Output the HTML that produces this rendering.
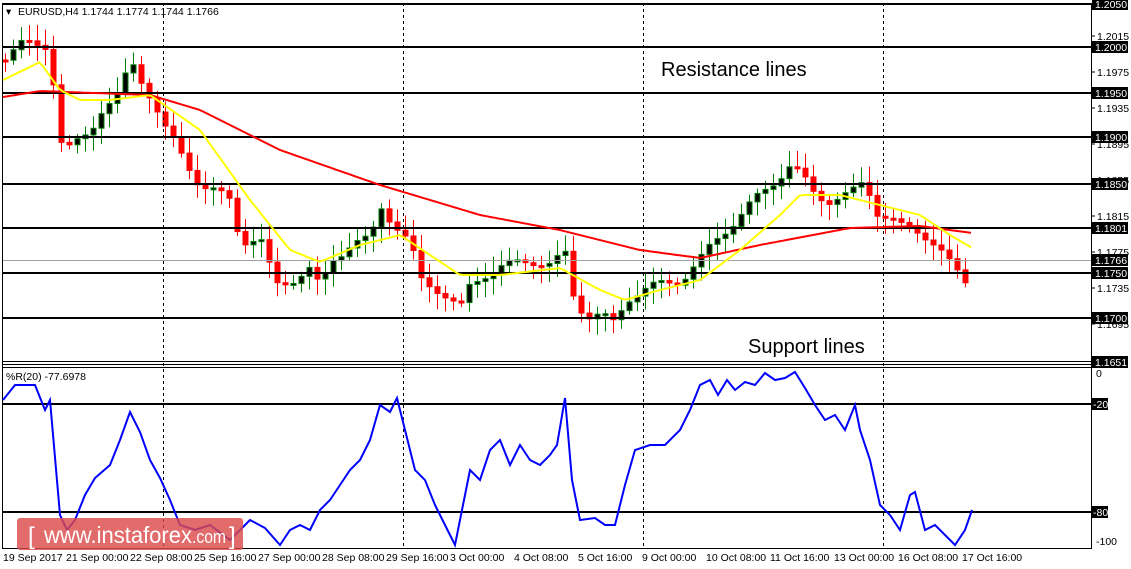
<!DOCTYPE html>
<html><head><meta charset="utf-8">
<style>
html,body{margin:0;padding:0;background:#fff;}
body{width:1131px;height:569px;overflow:hidden;position:relative;font-family:"Liberation Sans",sans-serif;}
svg{position:absolute;left:0;top:0;}
.ax{font-size:10.5px;fill:#000;font-family:"Liberation Sans",sans-serif;}
.lab{font-size:10.5px;fill:#fff;font-family:"Liberation Sans",sans-serif;}
.dt{font-size:10.5px;fill:#000;font-family:"Liberation Sans",sans-serif;}
.big{font-size:20px;font-family:"Liberation Sans",sans-serif;fill:#000;}
</style></head><body>
<svg id="s" width="1131" height="569" xmlns="http://www.w3.org/2000/svg">
<rect x="0" y="0" width="1131" height="569" fill="#fff"/>
<g id="cand"></g>
<g stroke="#000" stroke-width="1" stroke-dasharray="3,3">
<line x1="163.5" y1="3" x2="163.5" y2="548"/><line x1="403.5" y1="3" x2="403.5" y2="548"/>
<line x1="643.5" y1="3" x2="643.5" y2="548"/><line x1="883.5" y1="3" x2="883.5" y2="548"/>
</g>
<line x1="2" y1="260.5" x2="1091" y2="260.5" stroke="#a0a0a0"/>
<g stroke="#000" stroke-width="2">
<line x1="2" y1="4" x2="1091" y2="4"/><line x1="2" y1="47" x2="1091" y2="47"/>
<line x1="2" y1="93" x2="1091" y2="93"/><line x1="2" y1="137" x2="1091" y2="137"/>
<line x1="2" y1="184" x2="1091" y2="184"/><line x1="2" y1="228" x2="1091" y2="228"/>
<line x1="2" y1="273" x2="1091" y2="273"/><line x1="2" y1="318" x2="1091" y2="318"/>
<line x1="2" y1="404" x2="1091" y2="404"/><line x1="2" y1="512" x2="1091" y2="512"/>
</g>
<line x1="2" y1="361.5" x2="1091" y2="361.5" stroke="#000"/>
<line x1="2" y1="364.5" x2="1091" y2="364.5" stroke="#000"/>
<line x1="2" y1="367.5" x2="1091" y2="367.5" stroke="#000"/>
<line x1="2.5" y1="3" x2="2.5" y2="548" stroke="#000"/>
<line x1="1091.5" y1="3" x2="1091.5" y2="548" stroke="#000"/>
<line x1="2" y1="548.5" x2="1092" y2="548.5" stroke="#000"/>
<polyline id="red" fill="none" stroke="#ff0000" stroke-width="2"/>
<polyline id="yel" fill="none" stroke="#ffff00" stroke-width="2"/>
<polyline id="blue" fill="none" stroke="#0000ff" stroke-width="2"/>
<text x="6" y="15" class="ax">▾</text>
<text x="18" y="15" class="ax" font-size="11">EURUSD,H4  1.1744 1.1774 1.1744 1.1766</text>
<text x="6" y="380" class="ax" font-size="9.5">%R(20) -77.6978</text>
<text x="661" y="76" class="big">Resistance lines</text>
<text x="748" y="353" class="big">Support lines</text>
<g id="rax"></g>
<g class="dt">
<text x="3" y="561">19 Sep 2017</text><text x="66" y="561">21 Sep 00:00</text><text x="130" y="561">22 Sep 08:00</text><text x="194" y="561">25 Sep 16:00</text><text x="258" y="561">27 Sep 00:00</text><text x="322" y="561">28 Sep 08:00</text><text x="386" y="561">29 Sep 16:00</text><text x="450" y="561">3 Oct 00:00</text><text x="514" y="561">4 Oct 08:00</text><text x="578" y="561">5 Oct 16:00</text><text x="642" y="561">9 Oct 00:00</text><text x="706" y="561">10 Oct 08:00</text><text x="770" y="561">11 Oct 16:00</text><text x="834" y="561">13 Oct 00:00</text><text x="898" y="561">16 Oct 08:00</text><text x="962" y="561">17 Oct 16:00</text>
</g>
<rect x="17" y="518" width="226" height="32" rx="3" fill="#dc4b4b" fill-opacity="0.82"/>
<text x="28" y="544" font-family="'Liberation Sans',sans-serif" font-size="24" fill="#fff">[</text>
<text x="44" y="543" font-family="'Liberation Sans',sans-serif" font-size="23" fill="#fff" textLength="148" lengthAdjust="spacingAndGlyphs">www.instaforex</text>
<text x="192" y="543" font-family="'Liberation Sans',sans-serif" font-size="18" fill="#fff" textLength="34" lengthAdjust="spacingAndGlyphs">.com</text>
<text x="229" y="544" font-family="'Liberation Sans',sans-serif" font-size="24" fill="#fff">]</text>
</svg>
<script>
(function(){
function interp(pts,x){for(var i=0;i<pts.length-1;i++){if(x<=pts[i+1][0]){var a=pts[i],b=pts[i+1];return a[1]+(b[1]-a[1])*(x-a[0])/(b[0]-a[0]);}}return pts[pts.length-1][1];}
var cl=[[0,60],[20,45],[50,45],[58,140],[70,150],[90,130],[100,110],[120,95],[130,60],[150,95],[165,130],[185,160],[200,185],[230,200],[240,240],[260,240],[275,285],[290,280],[310,270],[320,290],[330,260],[350,245],[370,240],[380,205],[395,225],[410,245],[420,280],[440,290],[460,310],[470,285],[490,270],[510,265],[530,260],[550,265],[565,255],[570,290],[585,315],[600,315],[615,325],[625,300],[640,290],[660,285],[680,280],[700,260],[720,235],[740,215],[760,195],[775,180],[790,165],[800,175],[815,195],[830,200],[850,195],[865,180],[875,210],[890,220],[905,230],[920,230],[935,245],[950,265],[965,280],[972,262]];
var NS='http://www.w3.org/2000/svg';
var g=document.getElementById('cand');var prev=interp(cl,0);
function el(n,at){var e=document.createElementNS(NS,n);for(var k in at)e.setAttribute(k,at[k]);g.appendChild(e);}
for(var x=5;x<=972;x+=8){var c=interp(cl,x)+Math.sin(x*1.7)*5;var o=prev;var tp=Math.min(o,c),bt=Math.max(o,c);if(bt-tp<2)bt=tp+2;var hi=tp-4-Math.abs(Math.sin(x*3.1))*12,lo=bt+4+Math.abs(Math.cos(x*2.3))*12;
var bull=c<o;var col=bull?'#008000':'#ff0000';
el('line',{x1:x+0.5,y1:hi,x2:x+0.5,y2:lo,stroke:col});
el('rect',{x:x-2,y:tp,width:5,height:bt-tp,fill:bull?'#000':'#ff0000',stroke:col});prev=c;}
function pl(id,pts,step){var s='';for(var x=pts[0][0];x<=pts[pts.length-1][0];x+=step)s+=x+','+interp(pts,x).toFixed(1)+' ';document.getElementById(id).setAttribute('points',s);}
pl('red',[[3,97],[40,91],[150,95],[200,110],[280,150],[380,185],[480,215],[560,230],[640,250],[700,258],[760,245],[850,228],[920,226],[972,233]],4);
pl('yel',[[3,80],[40,62],[60,90],[80,100],[110,100],[150,95],[200,130],[250,200],[290,250],[320,262],[360,245],[400,235],[430,255],[460,275],[500,275],[560,268],[600,290],[625,300],[660,290],[700,280],[740,250],[780,215],[800,195],[840,195],[880,205],[920,215],[950,235],[972,248]],4);
var b=[[3,400],[15,385],[35,385],[45,410],[50,400],[60,515],[67,530],[75,520],[85,495],[95,478],[110,465],[120,440],[130,412],[140,432],[150,460],[160,478],[170,500],[180,525],[195,530],[210,525],[230,540],[250,520],[265,528],[280,545],[290,530],[300,525],[310,530],[320,510],[330,500],[340,485],[350,470],[360,460],[370,440],[380,405],[390,412],[397,398],[405,430],[415,470],[425,480],[435,505],[445,525],[455,545],[465,495],[470,470],[480,480],[490,450],[500,440],[510,465],[520,445],[530,460],[540,465],[550,455],[557,445],[565,398],[572,480],[580,520],[595,518],[605,525],[615,525],[625,485],[635,450],[650,445],[665,445],[680,430],[690,410],[700,385],[710,380],[718,395],[727,380],[735,390],[745,382],[755,385],[765,373],[775,380],[785,378],[795,372],[805,388],[815,405],[825,420],[835,415],[845,430],[855,405],[860,430],[870,460],[880,505],[890,515],[900,530],[910,495],[915,492],[925,530],[935,525],[945,535],[955,545],[965,530],[972,510]];
document.getElementById('blue').setAttribute('points',b.map(function(p){return p.join(',')}).join(' '));
var r='';
[[1.2015,36],[1.1975,72],[1.1935,108],[1.1895,144],[1.1855,180],[1.1815,216],[1.1775,252],[1.1735,288],[1.1695,324]].forEach(function(a){r+='<line x1="1092" y1="'+a[1]+'" x2="1095" y2="'+a[1]+'" stroke="#000"/><text x="1097" y="'+(a[1]+4)+'" class="ax">'+a[0].toFixed(4)+'</text>';});
[['1.2050',4],['1.2000',47],['1.1950',93],['1.1900',137],['1.1850',184],['1.1801',228],['1.1766',260],['1.1750',273],['1.1700',318],['1.1651',362]].forEach(function(a){r+='<rect x="1092" y="'+(a[1]-6)+'" width="36" height="12" fill="#000"/><text x="1095" y="'+(a[1]+4)+'" class="lab">'+a[0]+'</text>';});
[['-20',404],['-80',512]].forEach(function(a){r+='<rect x="1092" y="'+(a[1]-6)+'" width="16" height="12" fill="#000"/><text x="1093" y="'+(a[1]+4)+'" class="lab">'+a[0]+'</text>';});
r+='<text x="1096" y="377" class="ax">0</text><text x="1096" y="545" class="ax">-100</text>';
document.getElementById('rax').innerHTML=r;
})();
</script>
</body></html>
